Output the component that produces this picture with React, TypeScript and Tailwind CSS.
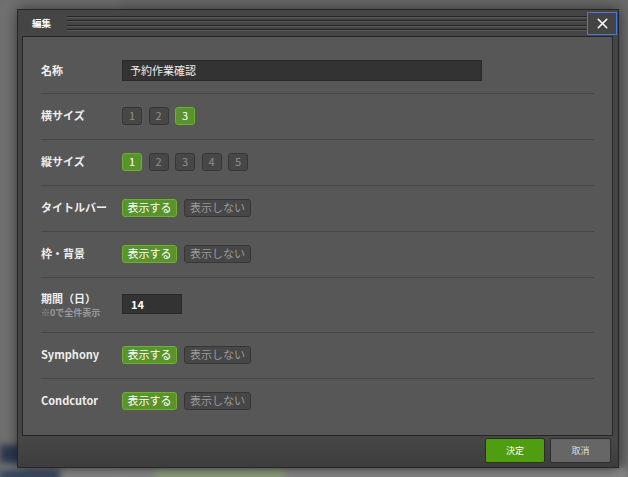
import React from 'react';
import { X } from 'lucide-react';

const font = { fontFamily: '"Noto Sans CJK JP", "Noto Sans", sans-serif' };

function NumButtons({ count, active }: { count: number; active: number }) {
  return (
    <div className="flex gap-[6.5px]">
      {Array.from({ length: count }, (_, i) => i + 1).map((n) =>
        n === active ? (
          <div
            key={n}
            className="w-[20px] h-[18px] rounded-[3px] border border-[#6db133] bg-[#5a922b] text-white text-[11px] flex items-center justify-center"
          >
            {n}
          </div>
        ) : (
          <div
            key={n}
            className="w-[20px] h-[18px] rounded-[3px] border border-[#363636] bg-[#474747] text-[#8f8f8f] text-[11px] flex items-center justify-center"
          >
            {n}
          </div>
        )
      )}
    </div>
  );
}

function ShowToggle() {
  return (
    <div className="flex gap-[7px]">
      <div className="w-[55px] h-[18px] rounded-[3px] border border-[#6db133] bg-[#5a922b] text-white text-[11px] flex items-center justify-center">
        表示する
      </div>
      <div className="w-[67px] h-[18px] rounded-[3px] border border-[#363636] bg-[#474747] text-[#9a9a9a] text-[11px] flex items-center justify-center">
        表示しない
      </div>
    </div>
  );
}

function Row({ label, children }: { label: string; children: React.ReactNode }) {
  return (
    <div className="flex items-center h-[46px] border-t border-[#474747] pb-[2px]">
      <div className="w-[81px] text-[11px] font-bold text-[#eeeeee]">{label}</div>
      {children}
    </div>
  );
}

export default function App() {
  return (
    <div className="relative w-[628px] h-[477px] overflow-hidden bg-[#6b6b6b]" style={font}>
      {/* blurred page behind */}
      <div className="absolute inset-0 blur-[3px]">
        <div className="absolute left-0 top-0 w-[120px] h-[477px] bg-[#727272]" />
        <div className="absolute left-0 top-[445px] w-[30px] h-[18px] bg-[#2c3a52]" />
        <div className="absolute left-0 top-[468px] w-[628px] h-[12px] bg-[#8a8a8a]" />
        <div className="absolute left-0 top-[470px] w-[60px] h-[10px] bg-[#33445e]" />
        <div className="absolute left-[155px] top-[470px] w-[130px] h-[10px] bg-[#8fa37a]" />
      </div>

      {/* modal */}
      <div className="absolute left-[17px] top-[9px] w-[602px] h-[459px] flex flex-col border border-[#262626] bg-[#454545] shadow-[0_0_14px_rgba(0,0,0,0.55)]">
        {/* title bar */}
        <div className="h-[26px] flex items-center pl-[14px]">
          <span className="text-[9.5px] font-bold text-white w-[35px]">編集</span>
          <div className="flex-1 flex flex-col gap-[2.5px] pt-[1px]">
            {[0, 1, 2, 3].map((i) => (
              <div key={i} className="h-[2px] border-t border-[#262626] bg-[#585858]" />
            ))}
          </div>
          <div className="w-[30px] h-[23px] mr-[1px] border border-[#4a7ad8] bg-[#444444] flex items-center justify-center">
            <X className="w-[17px] h-[17px] text-white" strokeWidth={2.2} />
          </div>
        </div>

        {/* content */}
        <div className="ml-[4px] mr-[5px] h-[400px] border border-[#262626] bg-[#575757] px-[18px] pt-[11px]">
          <div className="flex items-center h-[45px]">
            <div className="w-[81px] text-[11px] font-bold text-[#eeeeee]">名称</div>
            <div className="w-[360px] h-[21px] bg-[#333333] border border-[#2a2a2a] text-[11px] text-[#eeeeee] pl-[7px] flex items-center">
              予約作業確認
            </div>
          </div>
          <Row label="横サイズ">
            <NumButtons count={3} active={3} />
          </Row>
          <Row label="縦サイズ">
            <NumButtons count={5} active={1} />
          </Row>
          <Row label="タイトルバー">
            <ShowToggle />
          </Row>
          <Row label="枠・背景">
            <ShowToggle />
          </Row>
          <div className="flex items-center h-[55px] border-t border-[#474747] pb-[2px]">
            <div className="w-[81px] flex flex-col">
              <span className="text-[11px] font-bold text-[#eeeeee] leading-[16px]">期間（日）</span>
              <span className="text-[9px] font-bold text-[#9a9a9a] leading-[13px]">※0で全件表示</span>
            </div>
            <div className="w-[60px] h-[20px] bg-[#333333] border border-[#2a2a2a] text-[11px] font-bold text-white pl-[8px] flex items-center">
              14
            </div>
          </div>
          <Row label="Symphony">
            <ShowToggle />
          </Row>
          <Row label="Condcutor">
            <ShowToggle />
          </Row>
        </div>

        {/* footer */}
        <div className="flex-1 flex justify-end items-start pt-[2px] pr-[7px] gap-[5px] bg-gradient-to-b from-[#474747] to-[#3d3d3d]">
          <div className="w-[60px] h-[25px] rounded-[2px] border border-[#2d2d2d] bg-[#4f9e10] text-white text-[9px] flex items-center justify-center">
            決定
          </div>
          <div className="w-[61px] h-[25px] rounded-[2px] border border-[#2d2d2d] bg-[#666666] text-[#dddddd] text-[9px] flex items-center justify-center">
            取消
          </div>
        </div>
      </div>
    </div>
  );
}
